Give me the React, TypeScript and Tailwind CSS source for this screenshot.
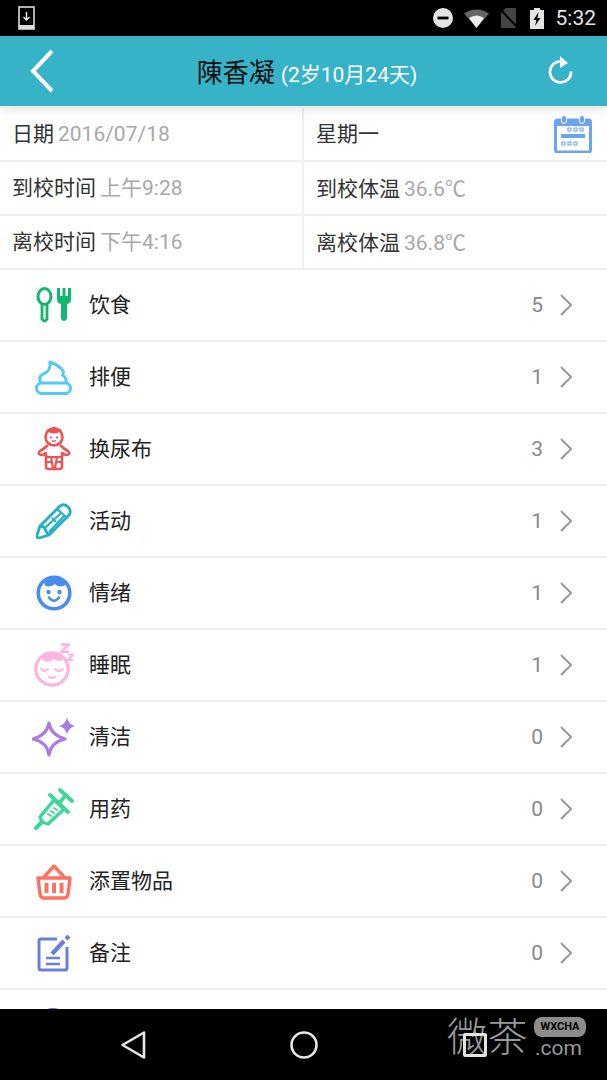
import type { ReactNode } from 'react';

const FONT = 'font-[Roboto,"Noto_Sans_CJK_SC",sans-serif]';

function Spoon() {
  return (
    <svg width="36" height="36" viewBox="0 0 36 36" fill="none">
      <ellipse cx="8.5" cy="9.5" rx="6.5" ry="8" stroke="#12B76F" strokeWidth="3" />
      <path d="M6 17 V32 Q8.5 36 11 32 V17" stroke="#12B76F" strokeWidth="2.8" />
      <path d="M22.5 1 V11 M28 1 V11 M33.5 1 V11" stroke="#12B76F" strokeWidth="3" />
      <path d="M21 9 H35 V12 Q35 16.5 31 17 V32 Q28 36 25 32 V17 Q21 16.5 21 12 Z" fill="#12B76F" />
    </svg>
  );
}

function Poop() {
  return (
    <svg width="37" height="35" viewBox="0 0 37 35" fill="none" stroke="#52CBF1" strokeWidth="3" strokeLinejoin="round">
      <path d="M6 23 Q2 17 9 13.5 Q16 11 15 2 Q21 4 25 7.5 Q30 11 27.5 15 Q32 18 31 23" />
      <rect x="1.5" y="23" width="34" height="10.5" rx="5.2" />
    </svg>
  );
}

function Baby() {
  return (
    <svg width="34" height="44" viewBox="0 0 34 44" fill="none" stroke="#EA5457" strokeWidth="2.6" strokeLinejoin="round">
      <circle cx="17" cy="10" r="8.5" />
      <path d="M11 3.5 Q17 7 23 3.5 L17 1 Z" fill="#EA5457" />
      <path d="M11 18 Q7 22 3 24 Q0 27 4 28 Q7 28 9 26 V40 Q9 42 12 42 H22 Q25 42 25 40 V26 Q27 28 30 28 Q34 27 31 24 Q27 22 23 18" />
      <path d="M9 30 H25 M14 30 L16 41 M20 30 L18 41 M9 35 L14 35 M20 35 L25 35" strokeWidth="2.2" />
      <circle cx="14" cy="10.5" r="1.1" fill="#EA5457" stroke="none" />
      <circle cx="20" cy="10.5" r="1.1" fill="#EA5457" stroke="none" />
      <path d="M15 13.5 Q17 15 19 13.5" strokeWidth="1.5" />
    </svg>
  );
}

function Pencil() {
  return (
    <svg width="36" height="36" viewBox="0 0 36 36" fill="none" stroke="#1FB1C2" strokeWidth="2.8" strokeLinejoin="round">
      <path d="M24 3 Q27 0.5 31 3 L33 5 Q35.5 9 33 12 L13 32 L3 35 Q0.5 35 1 32 L4 23 Z" />
      <path d="M4 23 Q7 23 9 25 Q9 28 13 32" />
      <path d="M21 6 L31 15 M9 25 L25 10 M13 29 L28 13 M16 15 L20 19" strokeWidth="2" />
    </svg>
  );
}

function Face() {
  return (
    <svg width="36" height="36" viewBox="0 0 36 36" fill="none">
      <circle cx="18" cy="18" r="15.8" stroke="#4A8CEE" strokeWidth="3.6" />
      <path d="M9 4 Q18 -1 30 6 Q31 11 25 11.5 Q21 11.5 19 9 Q15 12.5 9.5 11 Q7 8 9 4 Z" fill="#4A8CEE" />
      <circle cx="12.5" cy="17" r="2.2" fill="#4A8CEE" />
      <circle cx="23.5" cy="17" r="2.2" fill="#4A8CEE" />
      <path d="M13 22.5 Q18 29 23 22.5" stroke="#4A8CEE" strokeWidth="2.6" strokeLinecap="round" />
    </svg>
  );
}

function Sleep() {
  return (
    <svg width="40" height="44" viewBox="0 0 40 44" fill="none">
      <circle cx="18" cy="26" r="16.2" stroke="#FDB4DF" strokeWidth="3.2" />
      <path d="M9 12 Q18 7 29 12 Q30 17 25 18 Q22 18 20 16 Q16 20 10 18 Q7 15 9 12 Z" fill="#FDB4DF" />
      <path d="M7 26 Q10.5 30 14 26 M21 26 Q25 30 29 26" stroke="#FDB4DF" strokeWidth="2" strokeLinecap="round" />
      <path d="M15 34 Q18 35.5 21 34" stroke="#FDB4DF" strokeWidth="2" strokeLinecap="round" />
      <path d="M27 1.5 H35 L27 9 H35" stroke="#FDB4DF" strokeWidth="2.6" strokeLinejoin="round" />
      <path d="M34 11.5 H39 L34 17 H39" stroke="#FDB4DF" strokeWidth="2.2" strokeLinejoin="round" />
    </svg>
  );
}

function Sparkle() {
  return (
    <svg width="44" height="40" viewBox="0 0 44 40" fill="none">
      <path d="M17 6 Q19 18 33 22 Q19 25 17 38 Q15 25 1 22 Q15 18 17 6 Z" stroke="#A77DE0" strokeWidth="3.2" strokeLinejoin="round" />
      <path d="M35 0 Q36 7 43 9 Q36 11 35 18 Q34 11 27 9 Q34 7 35 0 Z" fill="#A77DE0" />
    </svg>
  );
}

function Syringe() {
  return (
    <svg width="40" height="42" viewBox="0 0 40 42" fill="none" stroke="#3BD795" strokeWidth="3.4" strokeLinecap="round" strokeLinejoin="round">
      <path d="M2 40 L8 34" strokeWidth="4" />
      <path d="M8 34 L6 29 L20 12 L30 21 L14 36 Z" />
      <path d="M16 7 L34 24 M26 2 L38 13 M32 7 L25 15" strokeWidth="3.8" />
      <path d="M14 26 L17 28 M17 23 L20 25 M20 20 L23 22" strokeWidth="2" />
    </svg>
  );
}

function Basket() {
  return (
    <svg width="36" height="37" viewBox="0 0 36 37" fill="none" stroke="#FB7263" strokeWidth="3.4" strokeLinejoin="round">
      <path d="M8 14 L18 3 L28 14" strokeLinecap="round" />
      <path d="M2 15 H34 L32 31 Q31.5 35 28 35 H8 Q4.5 35 4 31 Z" />
      <path d="M10.5 20 V30 M18 20 V30 M25.5 20 V30" strokeWidth="4" />
    </svg>
  );
}

function Note() {
  return (
    <svg width="34" height="37" viewBox="0 0 34 37" fill="none" stroke="#6C7EDC" strokeWidth="3" strokeLinejoin="round">
      <path d="M20 4 H4 Q2 4 2 6 V33 Q2 35 4 35 H28 Q30 35 30 33 V12" />
      <path d="M15 19 L27 6" strokeWidth="4.4" />
      <path d="M29 4 L32 1" strokeWidth="4" />
      <path d="M9 23 H23 M9 29 H23" strokeWidth="2.6" />
    </svg>
  );
}

function CalendarIcon() {
  return (
    <svg width="38" height="38" viewBox="0 0 38 38" fill="none">
      <rect x="1.5" y="5" width="35" height="32" rx="2" stroke="#6BA5EE" strokeWidth="3" fill="#fff" />
      <path d="M1 6 H37 V11 H1 Z" fill="#6BA5EE" />
      <rect x="7.5" y="0.5" width="5" height="8" rx="2.5" fill="#6BA5EE" stroke="#fff" />
      <rect x="25.5" y="0.5" width="5" height="8" rx="2.5" fill="#6BA5EE" stroke="#fff" />
      <rect x="7" y="19" width="24" height="4" fill="#6BA5EE" />
      <path d="M14 13 h3 v3 h-3 z M20 13 h3 v3 h-3 z M26 13 h3 v3 h-3 z M8 27 h3 v3 h-3 z M14 27 h3 v3 h-3 z M20 27 h3 v3 h-3 z" stroke="#6BA5EE" strokeWidth="1.1" />
    </svg>
  );
}

const items: { icon: ReactNode; label: string; count: number }[] = [
  { icon: <Spoon />, label: '饮食', count: 5 },
  { icon: <Poop />, label: '排便', count: 1 },
  { icon: <Baby />, label: '换尿布', count: 3 },
  { icon: <Pencil />, label: '活动', count: 1 },
  { icon: <Face />, label: '情绪', count: 1 },
  { icon: <Sleep />, label: '睡眠', count: 1 },
  { icon: <Sparkle />, label: '清洁', count: 0 },
  { icon: <Syringe />, label: '用药', count: 0 },
  { icon: <Basket />, label: '添置物品', count: 0 },
  { icon: <Note />, label: '备注', count: 0 },
];

function InfoCell({ label, value, unit, children }: { label: string; value?: string; unit?: string; children?: ReactNode }) {
  return (
    <div className="flex h-full flex-1 items-center justify-between pl-3 pr-[15px] text-[21px]">
      <span className="pt-[2px]">
        <span className="text-[#333]">{label}</span>
        {value ? <span className="ml-[4px] text-[#a8a8a8]">{value}</span> : null}
        {/* the degree sign is one narrow glyph in the reference */}
        {unit ? <span className="font-['Noto_Sans_CJK_SC'] text-[#a8a8a8]">{unit}</span> : null}
      </span>
      {children}
    </div>
  );
}

export default function App() {
  return (
    <div className={`${FONT} flex h-[1080px] w-[607px] flex-col overflow-hidden bg-white`}>
      <div className="flex h-9 shrink-0 items-center justify-between bg-black pl-[18px] pr-[11px]">
        <svg width="17" height="24" viewBox="0 0 17 24" fill="none">
          <rect x="1" y="1" width="15" height="22" stroke="#ddd" strokeWidth="1.6" />
          <path d="M1 19 H16 V23 H1 Z" fill="#ddd" />
          <path d="M8.5 6 V13 M5.5 11 L8.5 14 L11.5 11" stroke="#eee" strokeWidth="1.4" />
        </svg>
        <div className="flex items-center">
          <svg width="20" height="20" viewBox="0 0 20 20" className="mr-[11px]">
            <circle cx="10" cy="10" r="10" fill="#e4e4e4" />
            <rect x="4.5" y="8.6" width="11" height="2.8" fill="#000" />
          </svg>
          <svg width="25" height="19" viewBox="0 0 25 19" className="mr-[11px]">
            <path d="M0 4.5 Q12.5 -3.5 25 4.5 L12.5 19 Z" fill="#666" />
            <path d="M5 9 Q12.5 4 20 9 L12.5 19 Z" fill="#eee" />
          </svg>
          <svg width="17" height="20" viewBox="0 0 17 20" className="mr-[13px]">
            <path d="M6 0 H16 V20 H1 V5 Z" fill="#444" />
            <path d="M0 1 L17 19" stroke="#000" strokeWidth="2" />
          </svg>
          <svg width="14" height="21" viewBox="0 0 14 21" className="mr-[12px]">
            <path d="M4 0 H10 V2 H14 V21 H0 V2 H4 Z" fill="#e4e4e4" />
            <path d="M8.5 4 L3.5 12 H6.5 L5 18 L10.5 10 H7.5 Z" fill="#000" />
          </svg>
          <span className="text-[21px] leading-none text-[#e4e4e4]">5:32</span>
        </div>
      </div>

      <header className="relative z-10 flex h-[70px] shrink-0 items-center justify-between bg-[#37B3C7] pl-[28px] pr-[34px] shadow-[0_2px_12px_rgba(0,0,0,0.14)]">
        <svg width="28" height="44" viewBox="0 0 28 44" fill="none">
          <path d="M24 2 L5 22 L24 42" stroke="#fff" strokeWidth="4" />
        </svg>
        <div className="ml-[11px] mt-[4px] flex items-baseline">
          <span className="text-[26px] leading-none text-[#111]">陳香凝</span>
          <span className="ml-[6px] text-[21px] leading-none text-white">(2岁10月24天)</span>
        </div>
        <svg width="26" height="30" viewBox="0 0 26 30" fill="none">
          <path d="M19 7 A10.5 10.5 0 1 0 24 15.5" stroke="#fff" strokeWidth="2.8" />
          <path d="M13 0 L21 7 L13 12 Z" fill="#fff" />
        </svg>
      </header>

      <div className="min-h-0 flex-1 overflow-hidden">
        <div className="pt-[2px]">
          {[
            [{ label: '日期', value: '2016/07/18' }, { label: '星期一' }],
            [{ label: '到校时间', value: '上午9:28' }, { label: '到校体温', value: '36.6', unit: '℃' }],
            [{ label: '离校时间', value: '下午4:16' }, { label: '离校体温', value: '36.8', unit: '℃' }],
          ].map((row, i) => (
            <div key={i} className="flex h-[54px] border-b-2 border-[#f0f0f2]">
              <div className="w-[302px] shrink-0">
                <InfoCell label={row[0].label} value={row[0].value} />
              </div>
              <div className="w-0.5 bg-[#f0f0f2]" />
              <InfoCell label={row[1].label} value={row[1].value} unit={row[1].unit}>
                {i === 0 ? <CalendarIcon /> : null}
              </InfoCell>
            </div>
          ))}
        </div>

        {items.map((item) => (
          <div key={item.label} className="flex h-[72px] items-center border-b-2 border-[#f0f0f2] pr-[34px]">
            <div className="flex w-[89px] shrink-0 justify-center pl-[18px]">
              <div className="flex w-[44px] justify-center">{item.icon}</div>
            </div>
            <span className="flex-1 pt-[2px] text-[21px] text-[#222]">{item.label}</span>
            <span className="mr-[16px] pt-[2px] text-[21px] text-[#888]">{item.count}</span>
            <svg width="14" height="22" viewBox="0 0 14 22" fill="none">
              <path d="M2 1 L12 11 L2 21" stroke="#999" strokeWidth="2" />
            </svg>
          </div>
        ))}

        <div className="pl-[47px] pt-[18px]">
          <div className="h-3 w-3 rounded-t-sm bg-[#6C7EDC]" />
        </div>
      </div>

      <nav className="relative flex h-[71px] shrink-0 items-center bg-black">
        <div className="flex w-full items-center pl-[120px]">
          <svg width="26" height="30" viewBox="0 0 26 30" fill="none">
            <path d="M24 2.5 L2.5 15 L24 27.5 Z" stroke="#e8e8e8" strokeWidth="2.6" strokeLinejoin="round" />
          </svg>
          <svg width="28" height="28" viewBox="0 0 28 28" fill="none" className="ml-[144px]">
            <circle cx="14" cy="14" r="12.5" stroke="#e8e8e8" strokeWidth="2.6" />
          </svg>
        </div>
        <div className="absolute left-[447px] top-[7px] flex items-start">
          <span className="text-[40px] leading-[44px] font-light tracking-[0.5px] text-[#9a9a9a]">微茶</span>
          <div className="ml-[6px] mt-px flex flex-col items-center">
            <span className="flex h-[20px] w-[52px] items-center justify-center rounded-[8px] bg-[#8c8c8c] text-[11px] font-bold text-black">WXCHA</span>
            <span className="-ml-[3px] -mt-[1px] text-[21px] leading-[24px] text-[#9a9a9a]">.com</span>
          </div>
        </div>
        <div className="absolute left-[463px] top-[24px] h-[24px] w-[24px] rounded-[2px] border-[3px] border-[#e4e4e4]" />
      </nav>
    </div>
  );
}
